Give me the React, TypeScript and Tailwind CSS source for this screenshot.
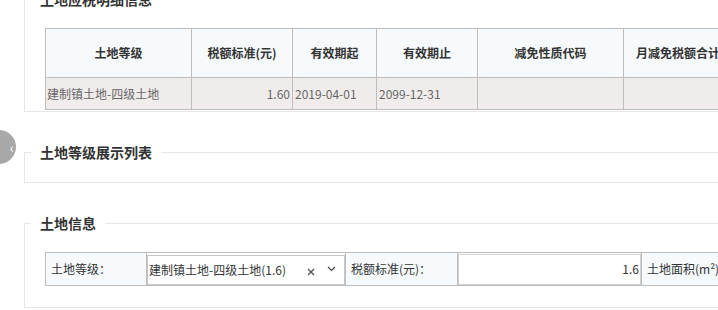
import React from "react";

const font = { fontFamily: '"Noto Sans CJK SC", "Noto Sans", sans-serif' };

function Legend({ children }: { children: React.ReactNode }) {
  return (
    <legend className="ml-[6px] px-[9px] text-[14px] leading-[20px] font-bold text-[#333]">
      {children}
    </legend>
  );
}

export default function App() {
  return (
    <div
      className="relative w-[718px] h-[310px] overflow-hidden bg-white"
      style={font}
    >
      {/* side toggle circle */}
      <div className="absolute left-[-18px] top-[130px] w-[34px] h-[34px] rounded-full bg-[#a8a8a8] flex items-center justify-end pr-[2px]">
        <span className="text-white text-[14px] leading-none">‹</span>
      </div>

      <div className="w-[780px] ml-[24px] mt-[-11px] flex flex-col">
        {/* Section 1 */}
        <fieldset className="border border-[#e6e6e6] pt-[19px] pb-[1px]">
          <Legend>土地应税明细信息</Legend>
          <table className="ml-[20px] table-fixed border-collapse text-[12px]">
            <colgroup>
              <col className="w-[146px]" />
              <col className="w-[101px]" />
              <col className="w-[84px]" />
              <col className="w-[101px]" />
              <col className="w-[146px]" />
              <col className="w-[130px]" />
            </colgroup>
            <thead>
              <tr className="h-[49px] bg-[#f6fafc] text-[#333] font-bold">
                <th className="border border-[#bdbdbd] text-center">土地等级</th>
                <th className="border border-[#bdbdbd] text-center">税额标准(元)</th>
                <th className="border border-[#bdbdbd] text-center">有效期起</th>
                <th className="border border-[#bdbdbd] text-center">有效期止</th>
                <th className="border border-[#bdbdbd] text-center">减免性质代码</th>
                <th className="border border-[#bdbdbd] text-center whitespace-nowrap">月减免税额合计(元)</th>
              </tr>
            </thead>
            <tbody>
              <tr className="h-[32px] bg-[#f0ecec] text-[#666]">
                <td className="border border-[#bdbdbd] pl-[1px] text-left whitespace-nowrap">建制镇土地-四级土地</td>
                <td className="border border-[#bdbdbd] pr-[2px] text-right">1.60</td>
                <td className="border border-[#bdbdbd] pl-[2px] text-left">2019-04-01</td>
                <td className="border border-[#bdbdbd] pl-[2px] text-left">2099-12-31</td>
                <td className="border border-[#bdbdbd]"></td>
                <td className="border border-[#bdbdbd]"></td>
              </tr>
            </tbody>
          </table>
        </fieldset>

        {/* Section 2 */}
        <fieldset className="mt-[30px] border border-[#e6e6e6] pb-[20px]">
          <Legend>土地等级展示列表</Legend>
        </fieldset>

        {/* Section 3 */}
        <fieldset className="mt-[30px] border border-[#e6e6e6] pt-[19px] pb-[21px]">
          <Legend>土地信息</Legend>
          <table className="ml-[20px] table-fixed border-collapse text-[12px] text-[#333]">
            <colgroup>
              <col className="w-[101px]" />
              <col className="w-[199px]" />
              <col className="w-[112px]" />
              <col className="w-[184px]" />
              <col className="w-[120px]" />
            </colgroup>
            <tbody>
              <tr className="h-[33px]">
                <td className="border border-[#bdbdbd] bg-[#f6fafc] pl-[5px] whitespace-nowrap">土地等级：</td>
                <td className="border border-[#bdbdbd] p-0 align-top">
                  <div className="mt-[2px] h-[30px] border border-[#c6c6c6] bg-white flex items-center pl-[1px] pr-[8px]">
                    <span className="flex-1 whitespace-nowrap">建制镇土地-四级土地(1.6)</span>
                    <svg width="8" height="8" viewBox="0 0 8 8" className="mr-[12px] mt-[3px]">
                      <path d="M1 1 L7 7 M7 1 L1 7" stroke="#555" strokeWidth="1.4" />
                    </svg>
                    <svg width="9" height="6" viewBox="0 0 9 6" className="mb-[3px]">
                      <path d="M1 1 L4.5 4.5 L8 1" stroke="#444" strokeWidth="1.2" fill="none" />
                    </svg>
                  </div>
                </td>
                <td className="border border-[#bdbdbd] bg-[#f6fafc] pl-[5px] whitespace-nowrap">税额标准(元)：</td>
                <td className="border border-[#bdbdbd] p-0">
                  <div className="h-[31px] border border-[#cfcfcf] bg-white flex items-center justify-end pr-[1px]">
                    1.6
                  </div>
                </td>
                <td className="border border-[#bdbdbd] bg-[#f6fafc] pl-[5px] whitespace-nowrap">土地面积(m²)：</td>
              </tr>
            </tbody>
          </table>
        </fieldset>
      </div>
    </div>
  );
}
